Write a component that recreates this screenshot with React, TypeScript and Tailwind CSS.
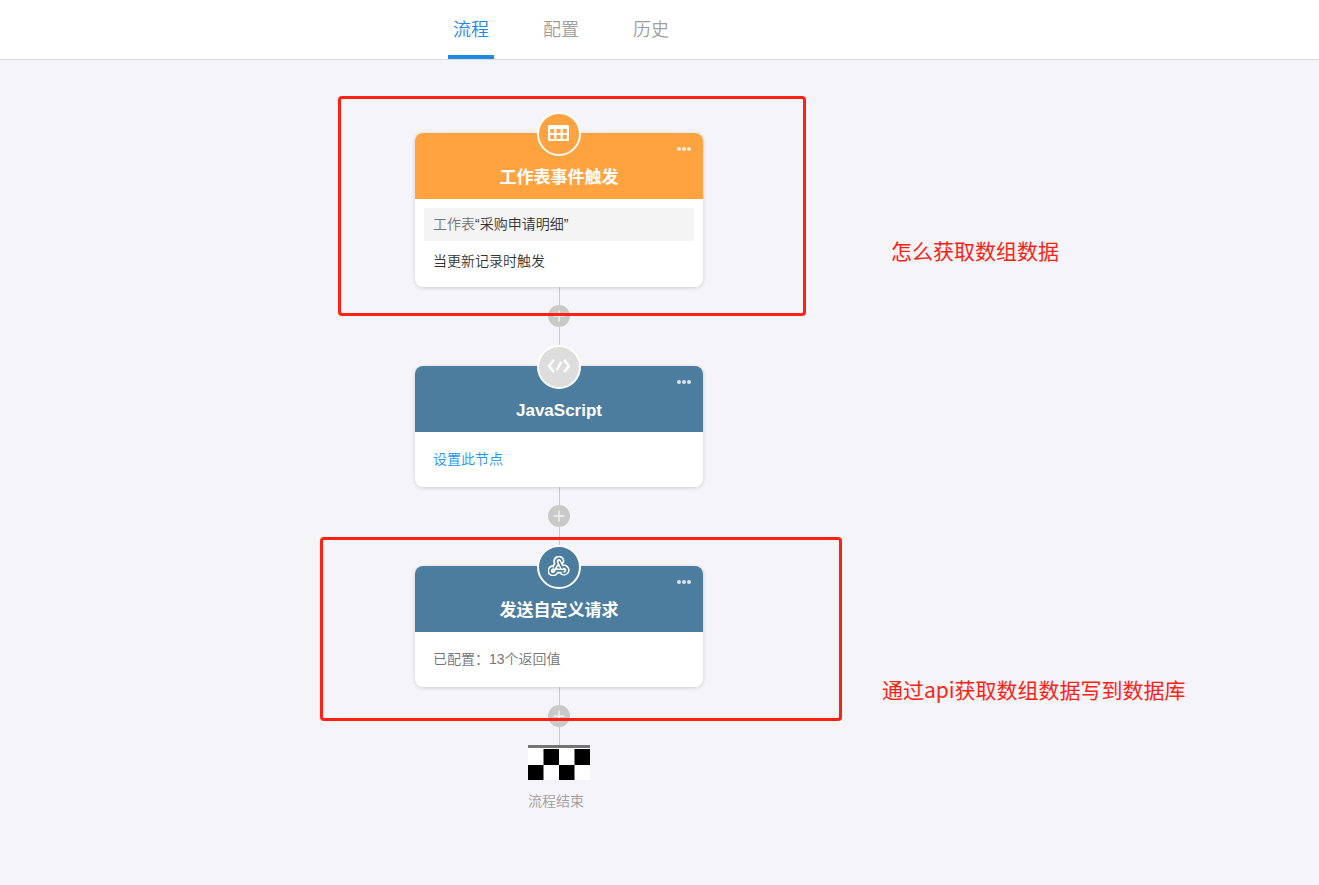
import type { ReactNode } from 'react';
import { clsx } from 'clsx';

const TABS = ['流程', '配置', '历史'];

const annotationBox = 'pointer-events-none absolute z-20 rounded-sm border-3 border-[#ff2214]';
const annotationText =
  "absolute z-20 whitespace-nowrap font-['Noto_Sans_CJK_SC',sans-serif] text-[21px] leading-8 text-[#ff2214]";

function TableIcon() {
  return (
    <svg width="22" height="16" viewBox="0 0 22 16" aria-hidden="true">
      <path
        fill="#fff"
        fillRule="evenodd"
        d="M1.500 0h18a1.500 1.500 0 0 1 1.500 1.500v13a1.500 1.500 0 0 1-1.500 1.500h-18a1.500 1.500 0 0 1-1.500-1.500v-13A1.500 1.500 0 0 1 1.500 0zM2.200 4v4h4V4zM8.500 4v4h4V4zM14.800 4v4h4V4zM2.200 10v4h4v-4zM8.500 10v4h4v-4zM14.800 10v4h4v-4z"
      />
    </svg>
  );
}

function CodeIcon() {
  return (
    <svg width="24" height="14" viewBox="0 0 24 14" fill="none" stroke="#fff" strokeWidth="2.4" aria-hidden="true">
      <path d="M7 .8 2 7l5 6.200M17 .8 22 7l-5 6.200M14.300 2.800 9.700 11.200" />
    </svg>
  );
}

function WebhookIcon() {
  return (
    <svg width="22" height="20" viewBox="0 0 22 20" fill="none" strokeLinecap="round" strokeLinejoin="round" aria-hidden="true">
      <g stroke="#fff" strokeWidth="5.200">
        <path d="M8.600 7.200A3 3 0 1 1 13.800 5.200M8.600 7.200 6 12" />
        <path d="M13.900 11.900A3 3 0 1 1 14.200 16.400M13.900 11.900 11 5.200" />
        <path d="M4.400 11.800A3 3 0 1 0 8 14.800H16.500" />
      </g>
      <g stroke="#4c7d9e" strokeWidth="1.700">
        <path d="M8.700 7.500A3.100 3.100 0 1 1 14 5.200M8.700 7.500 6.300 11.800" />
        <path d="M14.100 11.800A3.100 3.100 0 1 1 14.300 16.700M14.100 11.800 11.300 6" />
        <path d="M4.200 11.800A3.100 3.100 0 1 0 8.200 14.900H15.500" />
      </g>
      <path fill="#4c7d9e" d="M11 10.600 12 12.400H10z" />
    </svg>
  );
}

function MoreIcon() {
  return (
    <svg width="14" height="4" viewBox="0 0 14 4" fill="#fff" fillOpacity="0.8" aria-hidden="true">
      <circle cx="2" cy="2" r="2" />
      <circle cx="7" cy="2" r="2" />
      <circle cx="12" cy="2" r="2" />
    </svg>
  );
}

/** Vertical line with the "add node" button in the middle. */
function Connector() {
  return (
    <div className="flex flex-col items-center">
      <span className="h-[18px] w-px bg-[#c9c9c9]" />
      <button type="button" aria-label="添加节点" className="flex size-[22px] items-center justify-center rounded-full bg-[#c9c9c9]">
        <svg width="12" height="12" viewBox="0 0 12 12" stroke="#f1f1f1" strokeWidth="1.500" aria-hidden="true">
          <path d="M6 .5v11M.5 6h11" />
        </svg>
      </button>
      <span className="h-[18px] w-px bg-[#c9c9c9]" />
    </div>
  );
}

type FlowNodeProps = {
  title: string;
  icon: ReactNode;
  headerClass: string;
  iconClass: string;
  children: ReactNode;
  annotation?: ReactNode;
};

function FlowNode({ title, icon, headerClass, iconClass, children, annotation }: FlowNodeProps) {
  return (
    <section className="relative flex w-full flex-col items-center">
      <span
        className={clsx(
          'z-10 -mb-[23px] flex size-11 items-center justify-center rounded-full border-2 border-white pb-[2px]',
          iconClass,
        )}
      >
        {icon}
      </span>
      <div className="w-full overflow-hidden rounded-lg bg-white shadow-[0_1px_4px_rgba(0,0,0,0.16)]">
        <header className={clsx('relative px-4 pt-[33px] pb-[9px] text-center', headerClass)}>
          <h2 className="text-[17px] leading-6 font-bold text-white">{title}</h2>
          <button type="button" aria-label="更多" className="absolute top-2 right-3 flex h-4 items-center">
            <MoreIcon />
          </button>
        </header>
        <div className="text-sm leading-5 font-[350]">{children}</div>
      </div>
      {annotation}
    </section>
  );
}

function EndNode() {
  return (
    <div className="flex flex-col">
      <svg width="62" height="35" viewBox="0 0 62 35" aria-hidden="true">
        <path fill="#fff" d="M0 3h62v32H0z" />
        <path fill="#757575" d="M0 0h62v3H0z" />
        <path d="M15.500 4H31v16H15.500zM46.500 4H62v16H46.500zM0 20h15.500v15H0zM31 20h15.500v15H31z" />
      </svg>
      <p className="mt-[11px] text-sm leading-5 font-[350] text-[#9e9e9e]">流程结束</p>
    </div>
  );
}

export default function App() {
  return (
    <div className="flex min-h-screen flex-col bg-[#f4f4f9] font-['Liberation_Sans','Noto_Sans_CJK_SC',sans-serif]">
      <nav className="flex justify-center gap-11 border-b border-[#d9dadd] bg-white pr-[197px]">
        {TABS.map((tab, i) => (
          <a
            key={tab}
            href="#"
            aria-current={i === 0 ? 'page' : undefined}
            className={clsx(
              'flex h-[59px] w-[46px] items-center justify-center border-b-4 pt-1 text-lg font-[350]',
              i === 0 ? 'border-[#1e88e5] text-[#1e88e5]' : 'border-transparent text-[#9e9e9e]',
            )}
          >
            {tab}
          </a>
        ))}
      </nav>

      <main className="flex flex-1 justify-center pt-[52px] pr-[201px] pb-16">
        <div className="flex w-72 flex-col items-center">
          <FlowNode
            title="工作表事件触发"
            icon={<TableIcon />}
            headerClass="bg-[#ffa340]"
            iconClass="bg-[#ffa340]"
            annotation={
              <>
                <div className={clsx(annotationBox, '-top-4 -left-[77px] h-[220px] w-[468px]')} />
                <p className={clsx(annotationText, 'top-[122px] left-[476px]')}>怎么获取数组数据</p>
              </>
            }
          >
            <div className="px-[9px] pt-[9px] pb-4">
              <p className="bg-[#f4f4f4] px-[9px] pt-[6px] pb-[7px] text-[#333]">
                <span className="text-[#757575]">工作表</span>“采购申请明细”
              </p>
              <p className="mt-[10px] px-[9px] text-[#333]">当更新记录时触发</p>
            </div>
          </FlowNode>
          <Connector />
          <FlowNode title="JavaScript" icon={<CodeIcon />} headerClass="bg-[#4c7d9e]" iconClass="bg-[#ddd]">
            <div className="px-[18px] pt-[17px] pb-[18px]">
              <a href="#" className="text-[#2196f3]">
                设置此节点
              </a>
            </div>
          </FlowNode>
          <Connector />
          <FlowNode
            title="发送自定义请求"
            icon={<WebhookIcon />}
            headerClass="bg-[#4c7d9e]"
            iconClass="bg-[#4c7d9e]"
            annotation={
              <>
                <div className={clsx(annotationBox, '-top-2 -left-[95px] h-[184px] w-[522px]')} />
                <p className={clsx(annotationText, 'top-[128px] left-[467px]')}>通过api获取数组数据写到数据库</p>
              </>
            }
          >
            <p className="px-[18px] pt-[17px] pb-[18px] text-[#757575]">已配置：13个返回值</p>
          </FlowNode>
          <Connector />
          <EndNode />
        </div>
      </main>
    </div>
  );
}
